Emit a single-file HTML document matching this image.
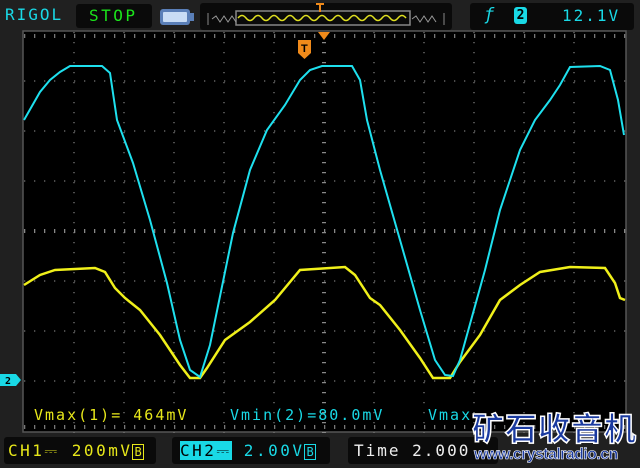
<!DOCTYPE html><html><head><style>
body{margin:0;width:640px;height:468px;background:#202020;overflow:hidden;position:relative;font-family:"DejaVu Sans Mono","Liberation Mono",monospace}
.b{position:absolute;background:#0a0a0a;border-radius:3px}
.t{position:absolute;font-size:15px;white-space:nowrap}
</style></head><body>
<div class="t" style="left:5px;top:5px;color:#19d9e6;font-size:16px;letter-spacing:2px">RIGOL</div>
<div class="b" style="left:76px;top:4px;width:76px;height:24px"></div>
<div class="t" style="left:89px;top:6px;color:#1be31b;font-size:16px;letter-spacing:2.5px">STOP</div>
<div style="position:absolute;left:160px;top:9px;width:30px;height:16px;background:#5a7fb8;border-radius:3px"><div style="margin:3px;height:10px;background:#c8dcf5;border-radius:1px"></div></div>
<div style="position:absolute;left:190px;top:13px;width:4px;height:8px;background:#5a7fb8"></div>
<div class="b" style="left:200px;top:3px;width:252px;height:27px"></div>
<svg style="position:absolute;left:0;top:0" width="640" height="468">
<rect x="236" y="11" width="174" height="14" fill="none" stroke="#888" stroke-width="1.5"/>
<path d="M208,13v12M444,13v12" stroke="#888" fill="none"/>
<path d="M212,19 l4,-3 4,6 4,-6 4,6 4,-6 4,6" stroke="#999" fill="none"/>
<path d="M412,19 l4,-3 4,6 4,-6 4,6 4,-6 4,6" stroke="#999" fill="none"/>
<path d="M238,18 q4,-5 8,0 q4,5 8,0 q4,-5 8,0 q4,5 8,0 q4,-5 8,0 q4,5 8,0 q4,-5 8,0 q4,5 8,0 q4,-5 8,0 q4,5 8,0 q4,-5 8,0 q4,5 8,0 q4,-5 8,0 q4,5 8,0 q4,-5 8,0 q4,5 8,0 q4,-5 8,0 q4,5 8,0 q4,-5 8,0 q4,5 8,0 q4,-5 8,0" stroke="#e0e020" stroke-width="1.5" fill="none"/>
<path d="M316,4h8M320,4v8" stroke="#f08a1a" stroke-width="2"/>
</svg>
<div class="b" style="left:470px;top:3px;width:164px;height:27px"></div>
<div class="t" style="left:484px;top:5px;color:#19d9e6;font-size:17px;font-style:italic">ƒ</div>
<div style="position:absolute;left:514px;top:7px;width:13px;height:17px;background:#19d9e6;border-radius:3px;color:#000;font-size:13px;text-align:center;line-height:17px;font-weight:bold">2</div>
<div class="t" style="left:562px;top:6px;color:#19d9e6;font-size:16px;letter-spacing:2px">12.1V</div>
<svg style="position:absolute;left:0;top:0" width="640" height="468">
<rect x="23" y="31" width="603" height="401" fill="#000" stroke="#555" stroke-width="1.5"/>
<g>
<path d="M74,32v401M124,32v401M174,32v401M224,32v401M274,32v401M374,32v401M424,32v401M474,32v401M524,32v401M574,32v401" stroke="#777" stroke-width="1.3" stroke-dasharray="1.3 8.7"/>
<path d="M24,81h602M24,131h602M24,181h602M24,281h602M24,331h602M24,381h602" stroke="#777" stroke-width="1.3" stroke-dasharray="1.3 8.7"/>
<path d="M24,231h602" stroke="#888" stroke-width="4" stroke-dasharray="1.3 8.7"/>
<path d="M324,32v401" stroke="#888" stroke-width="4" stroke-dasharray="1.3 8.7"/>
<path d="M24,36h602M24,427h602" stroke="#777" stroke-width="4" stroke-dasharray="1.3 8.7"/>
</g>
<polygon points="318,32 330,32 324,40" fill="#f08a1a"/>
<path d="M298,40h13v13l-6.5,6l-6.5,-6z" fill="#f08a1a"/>
<text x="301" y="52" font-size="11" font-weight="bold" fill="#000" font-family="Liberation Sans">T</text>
<polyline fill="none" stroke="#f0f01a" stroke-width="2.5" points="24,285 40,275 55,270 95,268 105,272 115,288 125,298 140,310 160,335 180,365 190,378 200,378 207,368 225,340 250,322 275,300 300,270 345,267 355,275 370,298 380,305 400,330 420,358 433,378 450,378 460,362 480,335 500,300 520,285 540,272 570,267 605,268 615,283 620,298 625,300"/>
<polyline fill="none" stroke="#1ee0ee" stroke-width="2" points="24,120 40,92 50,80 60,72 70,66 102,66 110,73 117,120 133,163 150,220 167,283 180,340 190,370 200,377 210,345 233,233 250,170 267,130 285,105 300,80 310,70 322,66 352,66 360,80 367,120 380,170 400,240 420,310 435,360 445,375 453,376 460,360 485,270 500,210 520,150 535,120 550,100 560,85 570,67 600,66 610,70 618,100 624,135"/>
<path d="M0,374h16l5,6l-5,6h-16z" fill="#19d9e6"/>
<text x="5" y="384" font-size="10" fill="#000" font-weight="bold">2</text>
</svg>
<div class="t" style="left:34px;top:406px;color:#e8e81a;letter-spacing:2px">Vmax(1)= 464mV</div>
<div class="t" style="left:230px;top:406px;color:#19d9e6;letter-spacing:2px">Vmin(2)=80.0mV</div>
<div class="t" style="left:428px;top:406px;color:#19d9e6;letter-spacing:2px">Vmax</div>
<div class="b" style="left:4px;top:437px;width:152px;height:27px"></div>
<div class="t" style="left:8px;top:441px;color:#e8e81a;font-size:16px;letter-spacing:2.5px">CH1⎓ 200mV<span style="border:1.5px solid #e8e81a;font-size:12px;padding:0 1px;letter-spacing:0">B</span></div>
<div class="b" style="left:172px;top:437px;width:158px;height:27px"></div>
<div class="t" style="left:180px;top:441px;color:#19d9e6;font-size:16px;letter-spacing:2.5px"><span style="background:#19d9e6;color:#000">CH2⎓</span> 2.00V<span style="border:1.5px solid #19d9e6;font-size:12px;padding:0 1px;letter-spacing:0">B</span></div>
<div class="b" style="left:348px;top:437px;width:150px;height:27px"></div>
<div class="t" style="left:354px;top:441px;color:#eee;font-size:16px;letter-spacing:2px">Time 2.000</div>
<div class="t" style="left:472px;top:404px;color:#1a3aa0;font-size:32px;font-weight:bold;font-family:'Noto Sans CJK SC',sans-serif;letter-spacing:1px;-webkit-text-stroke:1.5px #fff">矿石收音机</div>
<div class="t" style="left:474px;top:446px;color:#1a3aa0;font-size:16px;font-weight:bold;font-family:'Liberation Sans',sans-serif;letter-spacing:-0.6px;-webkit-text-stroke:0.6px #fff">www.crystalradio.cn</div>
</body></html>
